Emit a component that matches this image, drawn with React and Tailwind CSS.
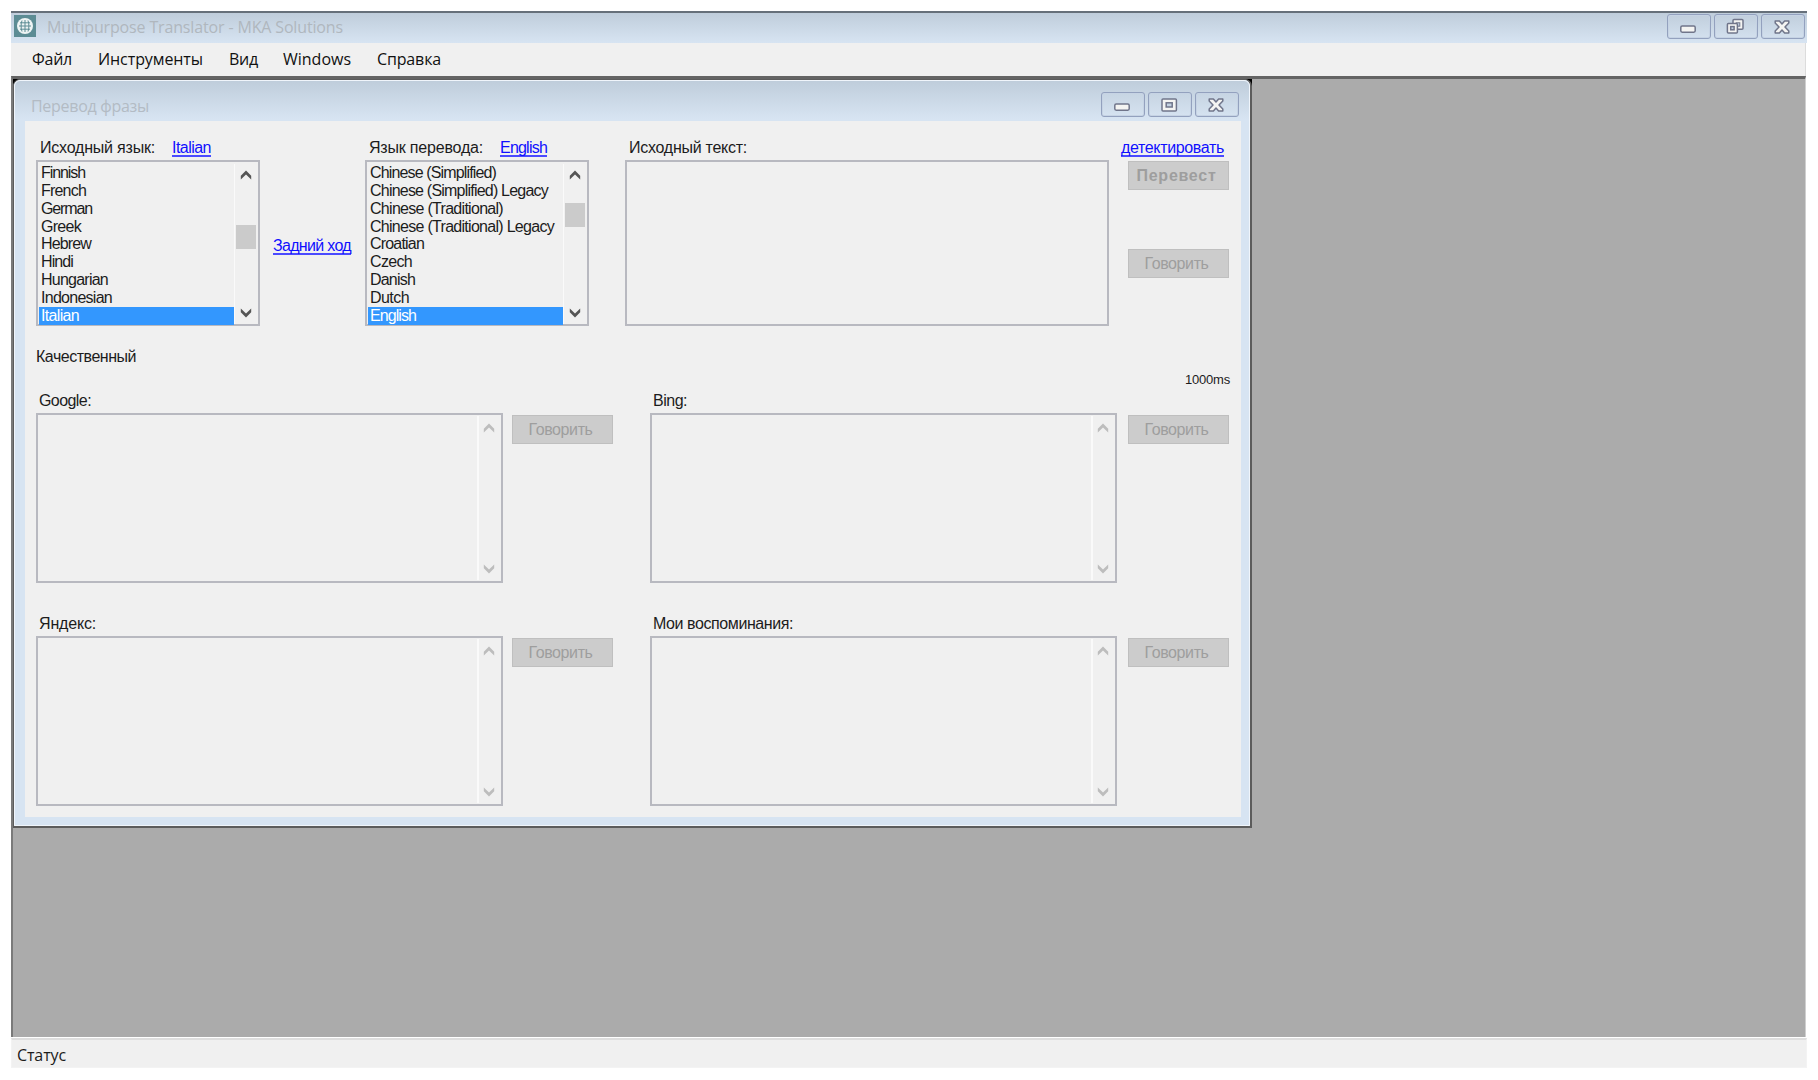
import { useLayoutEffect, useRef } from "react"

const sourceLanguages = [
  ["Finnish", 44],
  ["French", 45],
  ["German", 51],
  ["Greek", 40],
  ["Hebrew", 50],
  ["Hindi", 32],
  ["Hungarian", 67],
  ["Indonesian", 71],
  ["Italian", 38],
]

const targetLanguages = [
  ["Chinese (Simplified)", 126],
  ["Chinese (Simplified) Legacy", 178],
  ["Chinese (Traditional)", 133],
  ["Chinese (Traditional) Legacy", 184],
  ["Croatian", 54],
  ["Czech", 42],
  ["Danish", 45],
  ["Dutch", 39],
  ["English", 46],
]

const menu = [
  ["Файл", 40, "ml-[21px]"],
  ["Инструменты", 105, "ml-[26px]"],
  ["Вид", 29, "ml-[26px]"],
  ["Windows", 68, "ml-[25px]"],
  ["Справка", 64, "ml-[26px]"],
]

// one line of text, tracked so that it takes up the given width
const Label = ({ children, width, className = "" }) => {
  const ref = useRef(null)

  useLayoutEffect(() => {
    const el = ref.current
    el.style.letterSpacing = "0px"
    const natural = el.getBoundingClientRect().width
    el.style.letterSpacing = `${(width - natural) / children.length}px`
  }, [children, width])

  return (
    <span ref={ref} className={`inline-block shrink-0 whitespace-pre ${className}`}>
      {children}
    </span>
  )
}

const Link = ({ children, width, className = "" }) => (
  <a
    href="#"
    className={`block h-[19px] w-fit border-b-2 border-[#4a4aff] text-[16px] leading-[20px] text-[#1010ff] ${className}`}
  >
    <Label width={width}>{children}</Label>
  </a>
)

const Chevron = ({ down, className = "" }) => (
  <svg viewBox="0 0 12 10" className={`h-[10px] w-[12px] shrink-0 ${className}`}>
    <path
      d={down ? "M.8.6v3.600L6 9.400l5.200-5.200V.6L6 5.600z" : "M.8 9.400V5.800L6 .6l5.200 5.200v3.600L6 4.400z"}
      fill="currentColor"
    />
  </svg>
)

const MinimizeIcon = () => (
  <svg viewBox="0 0 18 18" className="h-[18px] w-[18px]">
    <rect x="1.8" y="8" width="14.4" height="6.2" rx="1.4" fill="#f4f4f2" stroke="#70758a" strokeWidth="1.5" />
  </svg>
)

const MaximizeIcon = () => (
  <svg viewBox="0 0 18 18" className="h-[18px] w-[18px]">
    <rect x="2" y="3" width="14.4" height="12" rx="1" fill="#f4f4f2" stroke="#70758a" strokeWidth="1.5" />
    <rect x="6.2" y="6.8" width="6" height="4.2" fill="#c4d2e2" stroke="#70758a" strokeWidth="1.5" />
  </svg>
)

const RestoreIcon = () => (
  <svg viewBox="0 0 18 18" className="h-[18px] w-[18px]">
    <rect x="7" y="1.6" width="10" height="9.600" rx="1" fill="#f4f4f2" stroke="#70758a" strokeWidth="1.5" />
    <rect x="10.2" y="4.800" width="3.6" height="3.4" fill="#c4d2e2" stroke="#70758a" strokeWidth="1" />
    <rect x="1.4" y="5.400" width="10" height="9.600" rx="1" fill="#f4f4f2" stroke="#70758a" strokeWidth="1.5" />
    <rect x="4.700" y="8.600" width="3.4" height="3.2" fill="#c4d2e2" stroke="#70758a" strokeWidth="1.5" />
  </svg>
)

const CloseIcon = () => (
  <svg viewBox="0 0 18 18" className="h-[18px] w-[18px]">
    <path
      d="M2.2 3h4.2L9 6l2.6-3h4.2v2L12 9l3.8 4v2h-4.2L9 12l-2.6 3H2.2v-2L6 9 2.2 5z"
      fill="#f4f4f2"
      stroke="#70758a"
      strokeWidth="1.5"
      strokeLinejoin="round"
    />
  </svg>
)

const WindowButtons = ({ middle }) => (
  <div className="flex gap-[3px]">
    {[<MinimizeIcon />, middle, <CloseIcon />].map((icon, i) => (
      <button
        key={i}
        type="button"
        className="flex h-[25px] w-[44px] items-center justify-center rounded-[3px] border border-[#93a1be] pr-[2px] shadow-[inset_0_0_0_1px_#c6d3e4]"
      >
        {icon}
      </button>
    ))}
  </div>
)

const LanguageList = ({ items, selected, thumb }) => (
  <div className="flex h-[166px] w-[224px] border-2 border-[#b8b9c0] pl-px pt-[2px]">
    <ul className="w-[195px] text-[16px] leading-[17.85px] text-[#1c1c1c]">
      {items.map(([name, width]) => (
        <li
          key={name}
          className={name === selected ? "h-[18px] bg-[#3397fe] pl-[2px] text-white" : "h-[17.85px] pl-[2px]"}
        >
          <Label width={width}>{name}</Label>
        </li>
      ))}
    </ul>
    <div className="flex w-[23px] flex-col items-center border-l border-[#fafafa] text-[#555]">
      <Chevron className="mt-[6px]" />
      <div className={`h-[23.5px] w-[20.5px] bg-[#cbcbcb] ${thumb}`} />
      <Chevron down className="mb-[6px] mt-auto" />
    </div>
  </div>
)

const Button = ({ children, width, bold }) => (
  <button
    type="button"
    disabled
    className={`flex h-[29px] w-[101px] shrink-0 items-center justify-center border border-[#bfbfbf] bg-[#cccccc] pr-[4px] text-[16px] leading-[20px] text-[#9e9e9e] ${bold ? "font-bold" : ""}`}
  >
    <Label width={width}>{children}</Label>
  </button>
)

const Result = ({ title, width, gap }) => (
  <div>
    <div className="h-[22px] pl-[3px] text-[16px] leading-[20px] text-[#1c1c1c]">
      <Label width={width}>{title}</Label>
    </div>
    <div className={`flex ${gap}`}>
      <div className="flex h-[170px] w-[467px] justify-end border-2 border-[#b8b9c0] py-px">
        <div className="flex w-[24px] flex-col items-center justify-between border-l-2 border-[#fafafa] pb-[6px] pr-[2px] pt-[7px] text-[#bdbdbd]">
          <Chevron />
          <Chevron down />
        </div>
      </div>
      <div className="pt-[2px]">
        <Button width={64}>Говорить</Button>
      </div>
    </div>
  </div>
)

const PhraseWindow = () => (
  <div className="h-[749px] w-[1239px] bg-black">
    <div className="h-[749px] w-[1239px] rounded-t-[7px] border border-b-2 border-r-2 border-[#5c5c5c] bg-[#d7e4f2]">
      <div className="h-full rounded-t-[6px] border border-[#f0f5fb] bg-[linear-gradient(#bfcddb_0px,#d7e4f2_38px)] pl-[10px]">
        <div className="flex h-[40px] justify-between pr-[10px] pt-[11px]">
          <Label
            width={118}
            className="ml-[6px] mt-[4px] font-['Open_Sans',sans-serif] text-[16px] leading-[20px] text-[#b3bbc4]"
          >
            Перевод фразы
          </Label>
          <WindowButtons middle={<MaximizeIcon />} />
        </div>

        <div className="h-[696px] w-[1216px] bg-[#f0f0f0] pl-[11px] text-[16px]">
          <div className="flex">
            <div>
              <div className="flex h-[39px] gap-[17px] pl-[4px] pt-[17px] leading-[20px] text-[#1c1c1c]">
                <Label width={115}>Исходный язык:</Label>
                <Link width={39}>Italian</Link>
              </div>
              <LanguageList items={sourceLanguages} selected="Italian" thumb="mt-[45px]" />
            </div>

            <div className="w-[105px] pl-[13px] pt-[115px]">
              <Link width={78}>Задний ход</Link>
            </div>

            <div>
              <div className="flex h-[39px] gap-[17px] pl-[4px] pt-[17px] leading-[20px] text-[#1c1c1c]">
                <Label width={114}>Язык перевода:</Label>
                <Link width={47}>English</Link>
              </div>
              <LanguageList items={targetLanguages} selected="English" thumb="mt-[23px]" />
            </div>

            <div className="ml-[36px]">
              <div className="h-[39px] pl-[4px] pt-[17px] leading-[20px] text-[#1c1c1c]">
                <Label width={118}>Исходный текст:</Label>
              </div>
              <div className="h-[166px] w-[484px] border-2 border-[#b8b9c0]" />
            </div>

            <div className="ml-[12px]">
              <div className="h-[40px] pt-[17px]">
                <Link width={103}>детектировать</Link>
              </div>
              <div className="flex flex-col gap-[59px] pl-[7px]">
                <Button width={80} bold>Перевест</Button>
                <Button width={64}>Говорить</Button>
              </div>
            </div>
          </div>

          <div className="mt-[21px] h-[20px] leading-[20px] text-[#1c1c1c]">
            <Label width={100}>Качественный</Label>
          </div>
          <div className="mr-[11px] mt-[3px] flex h-[20px] justify-end text-[13px] leading-[20px] text-[#1c1c1c]">
            <Label width={45}>1000ms</Label>
          </div>

          <div className="mt-[1px] grid grid-cols-[614px_580px] gap-y-[31px]">
            <Result title="Google:" width={52} gap="gap-[9px]" />
            <Result title="Bing:" width={34} gap="gap-[11px]" />
            <Result title="Яндекс:" width={57} gap="gap-[9px]" />
            <Result title="Мои воспоминания:" width={140} gap="gap-[11px]" />
          </div>
        </div>
      </div>
    </div>
  </div>
)

const App = () => {
  return (
    <div className="h-[1080px] w-[1818px] bg-white pl-[11px] pt-[11px] font-['Liberation_Sans',sans-serif]">
      <div className="flex h-[32px] w-[1796px] border-t-2 border-[#66707a] bg-[linear-gradient(#bfcddb,#d7e4f2)] pl-[3px]">
        <div className="mt-[2px] flex h-[22px] w-[22px] items-center justify-center bg-[#5c8c94]">
          <svg viewBox="0 0 18 18" className="h-[18px] w-[18px]">
            <circle cx="9" cy="9" r="8" fill="#eef4f4" />
            <path
              d="M9 3v12M3 9h12M6 3.500C4.800 7 4.800 11 6 14.500M12 3.500c1.200 3.500 1.200 7.500 0 11M4 5.800h10M4 12.200h10"
              fill="none"
              stroke="#5c8c94"
              strokeWidth="1"
            />
          </svg>
        </div>
        <Label
          width={296}
          className="ml-[11px] mt-[4px] font-['Open_Sans',sans-serif] text-[16px] leading-[20px] text-[#b0b7be]"
        >
          Multipurpose Translator - MKA Solutions
        </Label>
        <div className="ml-auto mr-[2px] mt-[1px]">
          <WindowButtons middle={<RestoreIcon />} />
        </div>
      </div>

      <div className="flex h-[33px] w-[1795px] border-r border-[#dcdcdc] bg-[#f0f0f0] pt-[6px] font-['Open_Sans',sans-serif] text-[16px] leading-[20px] text-[#111]">
        {menu.map(([name, width, margin]) => (
          <Label key={name} width={width} className={margin}>
            {name}
          </Label>
        ))}
      </div>

      <div className="h-[961px] w-[1795px] border-l-2 border-r border-t-[3px] border-l-[#7a7a7a] border-r-[#cfcfcf] border-t-[#646464] bg-[#ababab]">
        <PhraseWindow />
      </div>

      <div className="mt-[1px] h-[30px] w-[1796px] border border-t-2 border-[#f3f3f3] border-t-[#dedede] bg-[#f0f0f0] pl-[5px] pt-[5px] font-['Open_Sans',sans-serif] text-[16px] leading-[20px] text-[#1c1c1c]">
        <Label width={49}>Статус</Label>
      </div>
    </div>
  )
}

export default App
